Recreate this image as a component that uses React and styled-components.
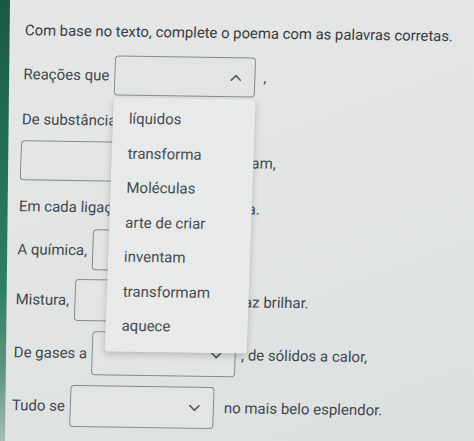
import React from "react";
import styled, { createGlobalStyle } from "styled-components";

const GlobalStyle = createGlobalStyle`
  html, body { margin: 0; padding: 0; }
  body {
    background: #e1e3e3;
    font-family: Roboto, "Noto Sans", "Liberation Sans", sans-serif;
  }
`;

const Page = styled.div`
  width: 474px;
  height: 441px;
  overflow: hidden;
  display: flex;
  background: linear-gradient(160deg, #e5e7e7 0%, #e2e4e4 55%, #dcdfdf 100%);
`;

const EdgeStrip = styled.div`
  flex: 0 0 10px;
  height: 100%;
  background: linear-gradient(180deg, #1b5745 0%, #23705a 35%, #2b7f66 65%, #5f9684 85%, #a9bdb6 100%);
  clip-path: polygon(0 0, 10px 0, 5px 100%, 0 100%);
`;

const Sheet = styled.div`
  flex: 1;
  padding: 20px 0 0 16px;
  transform: skew(-2deg, 0.8deg);
  transform-origin: 0 0;
  color: #41464d;
  font-size: 15px;
`;

const Title = styled.div`
  line-height: 20px;
  height: 20px;
  font-size: 14.85px;
  color: #363b41;
  white-space: nowrap;
`;

const Row = styled.div`
  display: flex;
  align-items: center;
  height: ${(p) => p.$h}px;
  margin-top: ${(p) => p.$mt}px;
  white-space: nowrap;
`;

const Label = styled.span`
  margin-right: 5px;
`;

const Trail = styled.span`
  margin-left: ${(p) => p.$ml ?? 8}px;
`;

const SelectWrap = styled.div`
  position: relative;
  flex: 0 0 auto;
  width: ${(p) => p.$w}px;
  height: 100%;
`;

const SelectBox = styled.div`
  box-sizing: border-box;
  width: 100%;
  height: 100%;
  border: 1px solid #868a8d;
  border-radius: 4px;
  background: #e3e5e5;
  display: flex;
  align-items: center;
  justify-content: flex-end;
  padding-right: 13px;
`;

const Menu = styled.ul`
  position: absolute;
  top: calc(100% + 2px);
  left: 0;
  width: 142px;
  margin: 0;
  padding: 4px 0 8px;
  list-style: none;
  background: #e8eaea;
  border-radius: 3px;
  box-shadow: 0 3px 7px rgba(0, 0, 0, 0.18), 0 0 2px rgba(0, 0, 0, 0.08);
  z-index: 10;
`;

const MenuItem = styled.li`
  height: 34.5px;
  display: flex;
  align-items: center;
  padding-left: 16px;
  color: #454a51;
  font-size: 15px;
`;

const Chevron = ({ up }) => (
  <svg width="11" height="7" viewBox="0 0 11 7" aria-hidden="true">
    <polyline
      points={up ? "1,6 5.5,1.5 10,6" : "1,1 5.5,5.5 10,1"}
      fill="none"
      stroke="#575b60"
      strokeWidth="1.7"
      strokeLinecap="round"
      strokeLinejoin="round"
    />
  </svg>
);

const Select = ({ w = 142, open, items }) => (
  <SelectWrap $w={w}>
    <SelectBox>
      <Chevron up={open} />
    </SelectBox>
    {open && (
      <Menu>
        {items.map((it) => (
          <MenuItem key={it}>{it}</MenuItem>
        ))}
      </Menu>
    )}
  </SelectWrap>
);

const options = [
  "líquidos",
  "transforma",
  "Moléculas",
  "arte de criar",
  "inventam",
  "transformam",
  "aquece",
];

export default function App() {
  return (
    <>
      <GlobalStyle />
      <Page>
        <EdgeStrip />
        <Sheet>
          <Title>Com base no texto, complete o poema com as palavras corretas.</Title>
          <Row $mt={14} $h={40}>
            <Label>Reações que</Label>
            <Select w={141} open items={options} />
            <Trail $ml={8}>,</Trail>
          </Row>
          <Row $mt={13} $h={24}>
            <span>De substâncias diferentes</span>
          </Row>
          <Row $mt={9} $h={40}>
            <Select />
            <Trail $ml={8}>que se ajuntam,</Trail>
          </Row>
          <Row $mt={14} $h={24}>
            <span>Em cada ligação, uma nova matéria.</span>
          </Row>
          <Row $mt={10} $h={41}>
            <Label>A química,</Label>
            <Select />
          </Row>
          <Row $mt={9} $h={42}>
            <Label>Mistura,</Label>
            <Select />
            <Trail $ml={11}>e faz brilhar.</Trail>
          </Row>
          <Row $mt={10} $h={44}>
            <Label>De gases a</Label>
            <Select w={144} />
            <Trail $ml={5}>, de sólidos a calor,</Trail>
          </Row>
          <Row $mt={10} $h={42}>
            <Label>Tudo se</Label>
            <Select w={144} />
            <Trail $ml={10}>no mais belo esplendor.</Trail>
          </Row>
        </Sheet>
      </Page>
    </>
  );
}
